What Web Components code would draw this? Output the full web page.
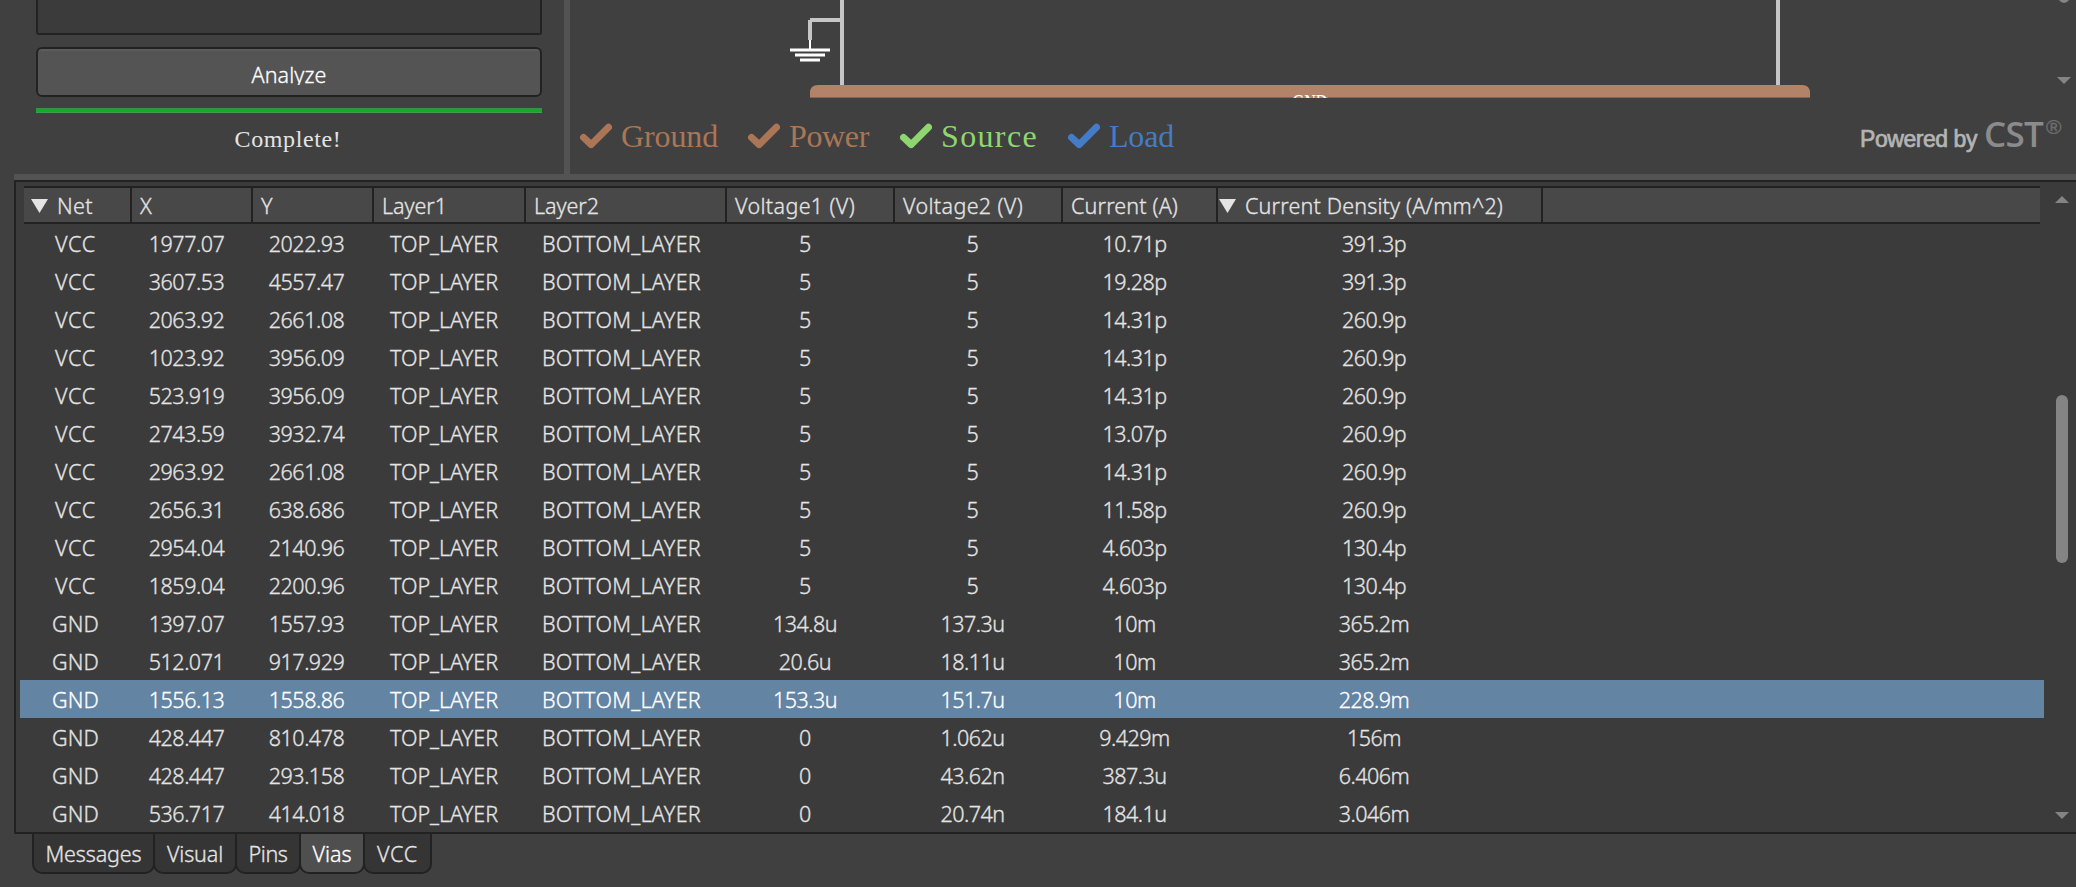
<!DOCTYPE html>
<html lang="en">
<head>
<meta charset="utf-8">
<title>Via analysis</title>
<style>
html,body{margin:0;height:100%;overflow:hidden;background:#404040}
body{font-family:"Noto Sans","Open Sans",sans-serif;font-size:21.5px;font-weight:300;-webkit-text-stroke:.3px currentColor;color:#e4e4e4}
</style>
</head>
<body>
<pi-app></pi-app>
<script>
const define = (name, html, setup) => customElements.define(name, class extends HTMLElement {
  connectedCallback() {
    if (this.shadowRoot) return;
    const t = document.createElement('template');
    t.innerHTML = typeof html === 'function' ? html(this) : html;
    this.attachShadow({mode: 'open'}).append(t.content.cloneNode(true));
    if (setup) setup(this);
  }
});

/* Label whose letter spacing is adjusted so that it takes the given width. */
define('fit-text', '<style>:host{display:inline-block;white-space:pre}span{display:inline-block}</style><span><slot></slot></span>', el => {
  const span = el.shadowRoot.querySelector('span');
  const target = +el.getAttribute('w');
  if (target) {
    span.style.letterSpacing = (target - span.getBoundingClientRect().width) / el.textContent.length + 'px';
    el.style.width = target + 'px';
  }
});

define('control-panel', `<style>
:host{display:flex;flex-direction:column;width:506px;padding:0 22px 0 36px;height:174px}
.list{box-sizing:border-box;height:35px;border:2px solid #222;border-top:0;border-radius:0 0 3px 3px;background:#3b3b3b}
button{all:unset;box-sizing:border-box;margin-top:12px;height:50px;border:2px solid #222;border-radius:6px;background:linear-gradient(#5c5c5c 0 2px,#545454 2px);color:#fff;text-align:center;-webkit-text-stroke:.3px #fff}
button div{height:36px;line-height:52px;overflow:hidden;margin-bottom:10px}
.bar{margin-top:11px;height:5px;background:linear-gradient(#3c8c4a 0 1px,#08b02a 1px 4px,#459a54 4px)}
.msg{font:24px/40px "Liberation Serif",serif;-webkit-text-stroke:0;text-align:center;margin-top:6px;padding-right:2px}
</style><div class="list"></div><button><div><fit-text w="75">Analyze</fit-text></div></button><div class="bar"></div><div class="msg"><fit-text w="107">Complete!</fit-text></div>`);

define('legend-item', el => `<style>
:host{display:flex;color:${el.getAttribute('color')};width:${el.getAttribute('cell')}px;flex:none}
svg{width:32px;height:26px;margin:12px 9px 0 0;flex:none}
span{font:32px/50px "Liberation Serif",serif;-webkit-text-stroke:0}
</style><svg viewBox="0 0 32 26"><path d="M3.6 14.5L11.2 21.6L28.5 4.2" fill="none" stroke="currentColor" stroke-width="7" stroke-linecap="round" stroke-linejoin="round"/></svg><span><fit-text w="${el.getAttribute('w')}">${el.getAttribute('label')}</fit-text></span>`);

define('schematic-view', `<style>
:host{display:flex;flex-direction:column;flex:1;height:174px;min-width:0}
svg{display:block;flex:none}
.foot{display:flex;padding-left:10px;margin-top:13px;height:63px}
.by{margin-left:auto;display:flex;padding-right:14px;font-family:"Liberation Sans",sans-serif;white-space:pre}
.p{font-size:23px;line-height:56px;color:#b4b4b4;-webkit-text-stroke:.7px #b4b4b4;margin-right:7px}
.c{font:600 35px/45px "Open Sans",sans-serif;-webkit-text-stroke:0;color:#8b8b8b;margin-right:3px}
.r{font-size:21px;line-height:32px;color:#6f6f6f;-webkit-text-stroke:.3px #6f6f6f}
</style>
<svg width="1506" height="98" viewBox="570 0 1506 98">
<g fill="#c6c6c6"><path d="M840 0h4v85h-4zM1776 0h4v85h-4zM810 18h30v4h-28v18h-4V20h2z"/></g>
<g stroke="#fff"><path d="M810 40v10" stroke-width="2"/><path d="M790 50h40M795 55h30M800 60h20" stroke-width="3"/></g>
<path d="M810 98V93q0-8 8-8h984q8 0 8 8v5z" fill="#b28368"/>
<text x="1292.500" y="109.500" textLength="35" lengthAdjust="spacingAndGlyphs" font-family="Liberation Serif" font-size="24" font-weight="400" fill="#fff">GND</text>
<path d="M810 97.500h483M1328 97.500h482" stroke="#7d675b"/>
<g fill="#848484"><path d="M2057 77h14l-7 7z"/><path d="M2059 0h10q-2 3-5 3t-5-3z"/></g>
</svg>
<div class="foot">
<legend-item color="#aa7656" label="Ground" w="97" cell="168"></legend-item>
<legend-item color="#aa7656" label="Power" w="80" cell="152"></legend-item>
<legend-item color="#8fd670" label="Source" w="97" cell="168"></legend-item>
<legend-item color="#457cc8" label="Load" w="65" cell="110"></legend-item>
<div class="by"><span class="p"><fit-text w="117">Powered by</fit-text></span><span class="c"><fit-text w="59">CST</fit-text></span><span class="r"><fit-text w="16">®</fit-text></span></div>
</div>`);

const heads = [[132,'Net',36,1],[121,'X',0],[121,'Y',0],[152,'Layer1',65],[201,'Layer2',65],[168,'Voltage1 (V)',120],[168,'Voltage2 (V)',120],[155,'Current (A)',107],[325,'Current Density (A/mm^2)',258,1]];
define('table-head', `<style>
:host{display:flex;box-sizing:border-box;height:38px;width:2016px;margin-left:8px;border:solid #222;border-width:2px 0;background:#484848}
div{box-sizing:border-box;display:flex;border-right:2px solid #222;padding-left:8px;line-height:36px;flex:none}
div:first-of-type{padding-left:7px}
div:last-child{padding-left:1px}
svg{width:17px;height:14px;margin:11px 9px 0 0}
</style>` + heads.map(([w,t,f,s], i) => `<div style="width:${i ? w : 108}px">${s ? '<svg viewBox="0 0 17 14"><path d="M0 0h17L8.500 14z" fill="#e4e4e4"/></svg>' : ''}<fit-text${f ? ` w="${f}"` : ''}>${t}</fit-text></div>`).join(''));

define('via-row', el => `<style>
:host{display:grid;grid-template-columns:111px 111px 129px 146px 209px 158px 177px 147px 332px;width:2024px;height:38px;line-height:39px;margin-left:4px;text-align:center}
:host([selected]){background:#6384a3;color:#fff;-webkit-text-stroke-color:#fff}
.n{letter-spacing:-.5px}
</style>` + el.getAttribute('data').split(' ').map((v, i) => i === 0 ? `<fit-text w="${v === 'VCC' ? 41 : 47}" style="justify-self:center">${v}</fit-text>` : i === 3 || i === 4 ? `<fit-text w="${i === 3 ? 108 : 159}" style="justify-self:center">${v}</fit-text>` : `<span class="n">${v}</span>`).join(''));

const rows = `VCC 1977.07 2022.93 5 5 10.71p 391.3p
VCC 3607.53 4557.47 5 5 19.28p 391.3p
VCC 2063.92 2661.08 5 5 14.31p 260.9p
VCC 1023.92 3956.09 5 5 14.31p 260.9p
VCC 523.919 3956.09 5 5 14.31p 260.9p
VCC 2743.59 3932.74 5 5 13.07p 260.9p
VCC 2963.92 2661.08 5 5 14.31p 260.9p
VCC 2656.31 638.686 5 5 11.58p 260.9p
VCC 2954.04 2140.96 5 5 4.603p 130.4p
VCC 1859.04 2200.96 5 5 4.603p 130.4p
GND 1397.07 1557.93 134.8u 137.3u 10m 365.2m
GND 512.071 917.929 20.6u 18.11u 10m 365.2m
GND 1556.13 1558.86 153.3u 151.7u 10m 228.9m
GND 428.447 810.478 0 1.062u 9.429m 156m
GND 428.447 293.158 0 43.62n 387.3u 6.406m
GND 536.717 414.018 0 20.74n 184.1u 3.046m`.split('\n').map(r => { const c = r.split(' '); c.splice(3, 0, 'TOP_LAYER', 'BOTTOM_LAYER'); return c.join(' '); });

define('scroll-bar', `<style>
:host{display:flex;flex-direction:column;align-items:center;width:14px;margin-left:11px}
i{width:12px;height:168px;border-radius:6px;background:#848484;margin:192px 0 249px}
svg{width:14px;height:7px;flex:none}svg:first-of-type{margin-top:14px}
</style><svg viewBox="0 0 14 7"><path d="M0 7h14L7 0z" fill="#848484"/></svg><i></i><svg viewBox="0 0 14 7"><path d="M0 0h14L7 7z" fill="#848484"/></svg>`);

define('via-table', `<style>
:host{display:flex;box-sizing:border-box;height:654px;margin-left:14px;border:2px solid #222;border-right:0;background:#3b3b3b}
.body{width:2028px;padding-top:4px}
</style><div class="body"><table-head></table-head>${rows.map((r, i) => `<via-row data="${r}"${i === 12 ? ' selected' : ''}></via-row>`).join('')}</div><scroll-bar></scroll-bar>`);

define('tab-item', el => `<style>
:host{box-sizing:border-box;display:block;width:${el.getAttribute('width')}px;height:40px;margin-right:-2px;border:2px solid #222;border-top:0;border-radius:0 0 10px 10px;background:#353535;text-align:center;line-height:40px}
:host([active]){background:#4f4f4f;color:#fff}
</style><fit-text w="${el.getAttribute('w')}">${el.getAttribute('label')}</fit-text>`);

define('pi-app', `<style>
:host{display:flex;flex-direction:column;height:887px;background:#404040}
.top{display:flex;height:174px}
.v{width:6px;background:#535353}
.h{height:6px;margin-left:14px;background:#535353}
nav{display:flex;padding-left:32px}
</style>
<div class="top"><control-panel></control-panel><div class="v"></div><schematic-view></schematic-view></div>
<div class="h"></div><via-table></via-table>
<nav><tab-item width="123" w="96" label="Messages"></tab-item><tab-item width="84" w="56" label="Visual"></tab-item><tab-item width="66" w="39" label="Pins"></tab-item><tab-item width="66" w="39" label="Vias" active></tab-item><tab-item width="69" w="41" label="VCC"></tab-item></nav>`);
</script>
</body>
</html>
